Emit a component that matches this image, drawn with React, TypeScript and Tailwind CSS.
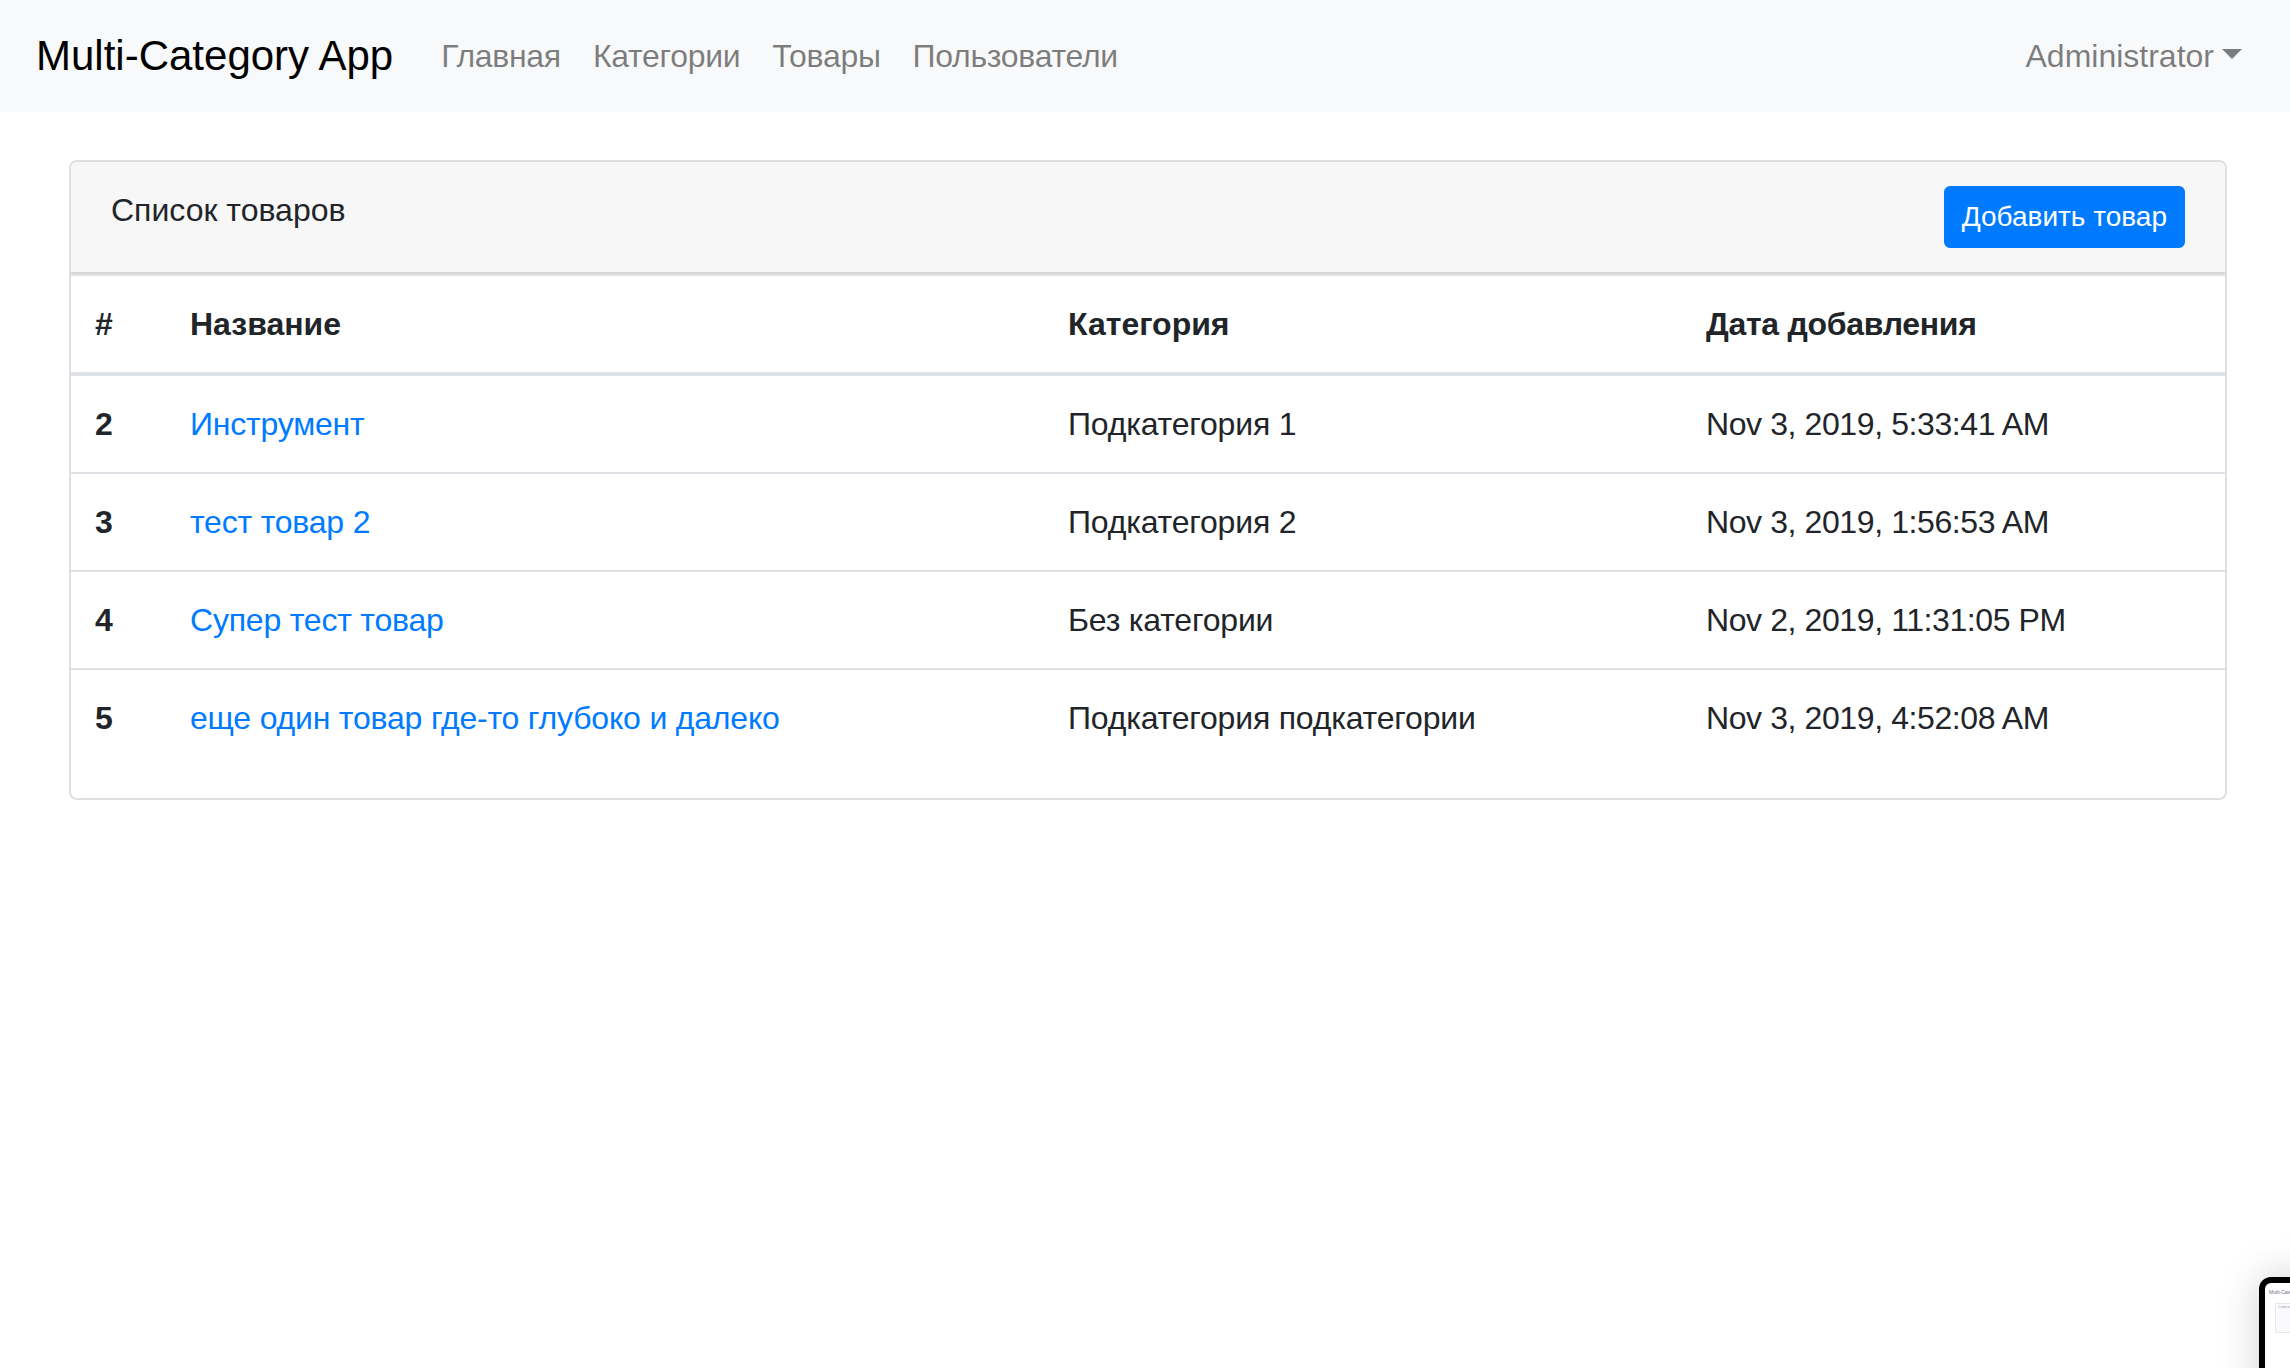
import React from "react";

type Product = {
    id: number;
    name: string;
    category: string;
    date: string;
};

const products: Product[] = [
    { id: 2, name: "Инструмент", category: "Подкатегория 1", date: "Nov 3, 2019, 5:33:41 AM" },
    { id: 3, name: "тест товар 2", category: "Подкатегория 2", date: "Nov 3, 2019, 1:56:53 AM" },
    { id: 4, name: "Супер тест товар", category: "Без категории", date: "Nov 2, 2019, 11:31:05 PM" },
    { id: 5, name: "еще один товар где-то глубоко и далеко", category: "Подкатегория подкатегории", date: "Nov 3, 2019, 4:52:08 AM" },
];

const navLinks = ["Главная", "Категории", "Товары", "Пользователи"];

const Navbar = () => {
    return (
        <nav className="flex items-center justify-between h-[112px] pl-[36px] pr-[32px] bg-[#f8f9fa]">
            <div className="flex items-center">
                <a href="#" className="text-[42px] leading-[60px] text-black mr-[32px]">
                    Multi-Category App
                </a>
                <ul className="flex items-center tracking-[-0.3px]">
                    {navLinks.map((link) => (
                        <li key={link}>
                            <a href="#" className="block px-[16px] py-[16px] text-[32px] leading-[48px] text-black/50">
                                {link}
                            </a>
                        </li>
                    ))}
                </ul>
            </div>
            <a href="#" className="flex items-center px-[16px] py-[16px] text-[32px] leading-[48px] text-black/50">
                Administrator
                <span className="inline-block w-0 h-0 ml-[8px] -mt-[4px] border-t-[10px] border-x-[10px] border-t-[#7b7c7d] border-x-transparent" />
            </a>
        </nav>
    );
};

const ProductsCard = () => {
    return (
        <div className="mt-[48px] ml-[69px] mr-[63px] border-2 border-black/[0.125] rounded-[8px] overflow-hidden">
            <div className="flex items-start justify-between px-[40px] py-[24px] bg-[#f7f7f7] border-b-2 border-black/[0.125]">
                <span className="text-[32px] leading-[48px] text-[#212529]">Список товаров</span>
                <button className="h-[62px] px-[16px] text-[28px] leading-[42px] text-white bg-[#007bff] border-2 border-[#007bff] rounded-[6px]">
                    Добавить товар
                </button>
            </div>
            <table className="w-full border-collapse mb-[32px] text-[32px] leading-[48px] text-[#212529]">
                <colgroup>
                    <col className="w-[95px]" />
                    <col className="w-[878px]" />
                    <col className="w-[638px]" />
                    <col />
                </colgroup>
                <thead>
                    <tr>
                        <th className="p-[24px] text-left font-bold border-t-2 border-b-4 border-[#dee2e6]">#</th>
                        <th className="p-[24px] text-left font-bold border-t-2 border-b-4 border-[#dee2e6]">Название</th>
                        <th className="p-[24px] text-left font-bold border-t-2 border-b-4 border-[#dee2e6]">Категория</th>
                        <th className="p-[24px] text-left font-bold tracking-[-0.3px] border-t-2 border-b-4 border-[#dee2e6]">Дата добавления</th>
                    </tr>
                </thead>
                <tbody>
                    {products.map((p) => (
                        <tr key={p.id}>
                            <th className="p-[24px] text-left font-bold border-t-2 border-[#dee2e6]">{p.id}</th>
                            <td className="p-[24px] tracking-[-0.2px] border-t-2 border-[#dee2e6]">
                                <a href="#" className="text-[#007bff]">{p.name}</a>
                            </td>
                            <td className="p-[24px] tracking-[-0.2px] border-t-2 border-[#dee2e6]">{p.category}</td>
                            <td className="p-[24px] tracking-[-0.4px] border-t-2 border-[#dee2e6]">{p.date}</td>
                        </tr>
                    ))}
                </tbody>
            </table>
        </div>
    );
};

// floating screenshot preview peeking in from the bottom-right corner
const Thumbnail = () => {
    return (
        <div className="absolute left-[2259px] top-[1277px] w-[220px] h-[150px] rounded-[12px] bg-black p-[6px] shadow-[0_0_40px_rgba(0,0,0,0.18)]">
            <div className="w-full h-full rounded-[6px] bg-white px-[4px] pt-[6px]">
                <div className="text-[5px] leading-[6px] text-gray-500">Multi-Category App</div>
                <div className="mt-[8px] ml-[6px] h-[30px] border border-gray-200 bg-gray-50">
                    <div className="text-[4px] leading-[6px] text-gray-400 px-[2px]">Список</div>
                </div>
            </div>
        </div>
    );
};

export default function App() {
    return (
        <div className="relative w-[2290px] h-[1368px] overflow-hidden bg-white font-['Liberation_Sans',Arial,sans-serif]">
            <Navbar />
            <ProductsCard />
            <Thumbnail />
        </div>
    );
}
